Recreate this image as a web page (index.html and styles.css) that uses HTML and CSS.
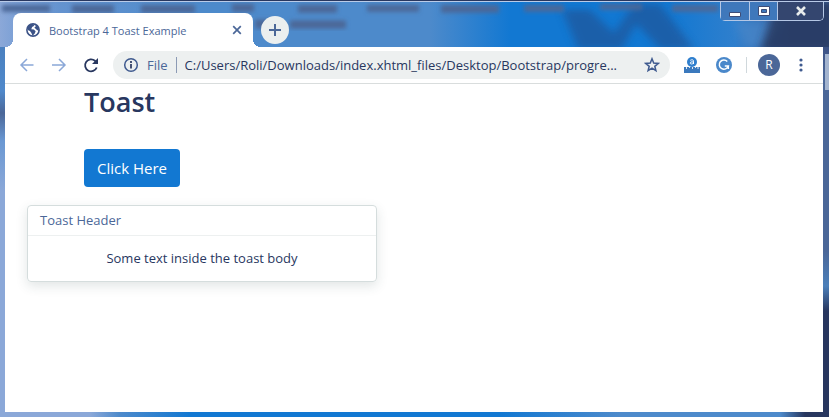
FILE: index.html
```html
<!DOCTYPE html>
<html lang="en">
<head>
<meta charset="utf-8">
<title>Bootstrap 4 Toast Example</title>
<link rel="stylesheet" href="styles.css">
</head>
<body>
<div class="window">
  <header class="titlebar">
    <svg class="wallpaper" viewBox="0 0 829 46" preserveAspectRatio="none" aria-hidden="true">
      <defs>
        <filter id="soft"><feGaussianBlur stdDeviation="2"/></filter>
        <filter id="wide"><feGaussianBlur stdDeviation="4"/></filter>
      </defs>
      <g fill="#24508f" opacity="0.6" filter="url(#wide)">
        <path d="M562 8h28l24 24 20-30h26l34 46h-34l-24-26-14 26h-44z"/>
      </g>
      <path d="M735 20h50l-20 26h-20z" fill="#4d8acb" opacity="0.6" filter="url(#wide)"/>
      <path d="M776 0h60v50h-76z" fill="#28375f" opacity="0.85" filter="url(#wide)"/>
      <g fill="#4b6798" filter="url(#soft)">
        <path d="M2 3h48v7H2zM72 3h42v8H72zM141 3h54v8h-54zM232 2h22v8h-22zM255 18h22v9h-22zM298 3h39v8h-39zM290 19h56v8h-56zM367 3h52v7h-52zM441 3h58v8h-58zM524 3h40v7h-40zM600 2h42v6h-42zM672 3h46v7h-46z"/>
      </g>
    </svg>
    <div class="tab">
      <svg viewBox="0 0 16 16" width="14" height="14" aria-hidden="true"><circle cx="8" cy="8" r="7" fill="#fff" stroke="#3c5387" stroke-width="1.8"/><path d="M1.500 5 4 2l4-1 1.500 2L7 4.500 6 7l3 .5 2 2-1 2.500-2.500 2.500L6 11 4.500 9 2 8zM11 2l3 3 1 4-2.500-1L11 6.500l-1.500-1L11 4z" fill="#3c5387"/></svg>
      <span class="tab-title">Bootstrap 4 Toast Example</span>
      <button class="plain" aria-label="Close tab"><svg viewBox="0 0 10 10" width="10" height="10"><path d="M1.200 1.200l7.600 7.600M8.800 1.200L1.200 8.800" stroke="#4b6798" stroke-width="1.700"/></svg></button>
    </div>
    <button class="new-tab" aria-label="New tab"><svg viewBox="0 0 14 14" width="14" height="14"><path d="M7 1v12M1 7h12" stroke="#4b6798" stroke-width="2"/></svg></button>
    <div class="window-buttons">
      <button aria-label="Minimize"><svg viewBox="0 0 14 12" width="14" height="12"><path d="M1.500 7.500h11v4h-11z" fill="#fff" stroke="#3d4d78"/></svg></button>
      <button aria-label="Maximize"><svg viewBox="0 0 14 12" width="14" height="12"><path d="M1.500 1.500h11v9h-11zM4.500 4.500h5v3h-5z" fill="#fff" fill-rule="evenodd" stroke="#3d4d78"/></svg></button>
      <button class="close" aria-label="Close"><svg viewBox="0 0 12 12" width="12" height="12"><path d="M2 2l8 8M10 2l-8 8" stroke="#e8ecec" stroke-width="2.600"/></svg></button>
    </div>
  </header>
  <nav class="toolbar">
    <button class="plain" aria-label="Back"><svg viewBox="0 0 16 16" width="16" height="16" fill="none" stroke="#8ba8d8" stroke-width="1.500"><path d="M14.500 8h-12M8 2L2 8l6 6"/></svg></button>
    <button class="plain" aria-label="Forward"><svg viewBox="0 0 16 16" width="16" height="16" fill="none" stroke="#8ba8d8" stroke-width="1.500"><path d="M1 8h12M8 2l6 6-6 6"/></svg></button>
    <button class="plain" aria-label="Reload"><svg viewBox="0 0 16 16" width="16" height="16"><path d="M13.700 10.500A6 6 0 1 1 12 3.800l1.500 1.500" fill="none" stroke="#28375f" stroke-width="1.800"/><path d="M15 1v6H9z" fill="#28375f"/></svg></button>
    <div class="omnibox">
      <svg viewBox="0 0 16 16" width="16" height="16" aria-hidden="true"><circle cx="8" cy="8" r="6.300" fill="none" stroke="#3f5a8f" stroke-width="1.500"/><path d="M8 7v4.500M8 4v2" stroke="#28375f" stroke-width="1.700"/></svg>
      <span class="scheme">File</span>
      <input class="url" aria-label="Address" value="C:/Users/Roli/Downloads/index.xhtml_files/Desktop/Bootstrap/progre...">
      <button class="plain" aria-label="Bookmark"><svg viewBox="0 0 16 16" width="16" height="16"><path d="M8 1.800l1.700 4.300 4.600.3-3.500 2.900 1.100 4.400L8 11.200l-3.900 2.500 1.100-4.400-3.500-2.900 4.600-.3z" fill="none" stroke="#3f5a8f" stroke-width="1.500"/></svg></button>
    </div>
    <div class="extensions">
      <button class="plain" aria-label="Ruler extension"><svg viewBox="0 0 16 16" width="16" height="16"><circle cx="8" cy="5" r="5" fill="#2f7fce"/><path d="M0 10h16v6H0z" fill="#3b79bd"/><path d="M6.300 3.300c2-1 3.200-.5 3.200 1V7M9.500 5c-2-.3-3.300 0-3.300 1.100s2 1.300 3.300 0" fill="none" stroke="#fff"/><path d="M2.500 10v2M5.500 10v1M8.500 10v2M11.500 10v1M14 10v2" stroke="#dce8f2"/></svg></button>
      <button class="plain" aria-label="Grammar extension"><svg viewBox="0 0 16 16" width="16" height="16"><circle cx="8" cy="8" r="8" fill="#4a88ca"/><path d="M11.300 4.500A4.600 4.600 0 1 0 12.300 9H8.800M12.300 8.500v3.500" fill="none" stroke="#fff" stroke-width="1.500"/></svg></button>
    </div>
    <button class="avatar" aria-label="Profile">R</button>
    <button class="plain" aria-label="Menu"><svg viewBox="0 0 4 14" width="4" height="14" fill="#3f5a8f"><circle cx="2" cy="2" r="1.600"/><circle cx="2" cy="7" r="1.600"/><circle cx="2" cy="12" r="1.600"/></svg></button>
  </nav>
  <main class="page">
    <div class="container">
      <h1>Toast</h1>
      <button class="btn">Click Here</button>
    </div>
    <section class="toast" role="status">
      <div class="toast-header">Toast Header</div>
      <div class="toast-body">Some text inside the toast body</div>
    </section>
  </main>
</div>
</body>
</html>
```
FILE: styles.css
```css
* { box-sizing: border-box; }

body {
  margin: 0;
  font-family: "Open Sans", "Noto Sans", sans-serif;
  color: #28375f;
}

button {
  font: inherit;
  border: 0;
  padding: 0;
}

svg { display: block; }

.plain { background: none; flex: none; }

/* Glass window frame over the desktop wallpaper */
.window {
  min-height: 100vh;
  padding: 0 6px 5px 5px;
  display: flex;
  flex-direction: column;
  border-top: 1px solid #28375f;
  background:
    linear-gradient(#a3b4cf, #a3b4cf) 100% 53px / 4px 36px no-repeat,
    linear-gradient(#3c5285 46px, #4b6798 75px, #4b6798 250px, #4c80ba 285px, #28375f 310px) 100% 0 / 6px 100% no-repeat,
    linear-gradient(#4a80bf 46px, #5089cb 90px, #4b6798 112px, #6a98d3 140px, #8ba8d8 190px) 0 0 / 5px 100% no-repeat,
    linear-gradient(90deg, #8ba8d8 90px, #4d8acb 120px, #1278d2 190px, #1278d2 500px, #4d8acb 620px, #4d8acb 780px, #28375f 805px) 0 100% / 100% 5px no-repeat,
    #1278d2;
}

.titlebar {
  position: relative;
  height: 46px;
  flex: none;
  display: flex;
  align-items: flex-end;
  margin: 0 -6px 0 -5px;
  padding-left: 13px;
  border-top: 1px solid #b9cbe8;
  background: linear-gradient(90deg, #8ba8d8 0, #7da1d6 14px, #6493cf 60px, #4d8acb 200px, #4d8acb 430px, #1278d2 510px, #1278d2 670px, #2f7fcd 735px, #3e609a 790px);
}

.wallpaper {
  position: absolute;
  inset: 0;
  width: 100%;
  height: 100%;
}

.tab,
.new-tab,
.window-buttons { position: relative; }

.tab {
  width: 240px;
  height: 34px;
  display: flex;
  align-items: center;
  gap: 9px;
  padding: 0 11px 0 13px;
  background: #fff;
  border-radius: 8px 8px 0 0;
}

/* Outward curves at the foot of the tab */
.tab::before,
.tab::after {
  content: "";
  position: absolute;
  bottom: 0;
  width: 8px;
  height: 8px;
}

.tab::before {
  right: 100%;
  background: radial-gradient(circle at 0 0, transparent 8px, #fff 8px);
}

.tab::after {
  left: 100%;
  background: radial-gradient(circle at 100% 0, transparent 8px, #fff 8px);
}

.tab-title {
  flex: 1;
  font-size: 11px;
  color: #4b6798;
  white-space: nowrap;
}

.new-tab {
  width: 28px;
  height: 28px;
  margin: 0 0 3px 8px;
  display: grid;
  place-items: center;
  border-radius: 50%;
  background: #ebefef;
}

.window-buttons {
  align-self: flex-start;
  display: flex;
  height: 19px;
  margin: 0 5px 0 auto;
  border: 1px solid #b4c7e5;
  border-top: 0;
  border-radius: 0 0 5px 5px;
}

.window-buttons button {
  width: 28px;
  display: grid;
  place-items: center;
  background: #3f78bb;
}

.window-buttons button + button { border-left: 1px solid #b4c7e5; }
.window-buttons .close { width: 46px; background: #34466f; border-radius: 0 0 4px 0; }

.toolbar {
  height: 37px;
  flex: none;
  display: flex;
  align-items: center;
  gap: 16px;
  padding: 0 20px 0 14px;
  background: #fff;
  border-bottom: 1px solid #d9dddd;
}

.omnibox {
  flex: 1;
  min-width: 0;
  height: 28px;
  margin-left: -2px;
  padding: 0 10px;
  display: flex;
  align-items: center;
  gap: 8px;
  font-size: 13px;
  border-radius: 14px;
  background: #edf0f0;
}

.scheme {
  padding-right: 8px;
  line-height: 16px;
  color: #4b6798;
  border-right: 1px solid #8c9bb5;
}

.url {
  flex: 1;
  min-width: 0;
  padding: 0;
  border: 0;
  background: none;
  font: inherit;
  color: #28375f;
}

.extensions {
  display: flex;
  gap: 16px;
  margin-left: -2px;
  padding-right: 14px;
  border-right: 1px solid #d0d8dc;
}

.avatar {
  width: 22px;
  height: 22px;
  margin: 0 3px 0 -5px;
  border-radius: 50%;
  background: #4b6798;
  color: #fff;
  font-size: 12px;
  line-height: 22px;
}

.page {
  flex: 1;
  background: #fff;
  padding-bottom: 16px;
}

.container { padding: 0 79px; }

h1 {
  margin: 0 0 29px;
  font-size: 27px;
  font-weight: 600;
  line-height: 36px;
}

.btn {
  height: 38px;
  padding: 0 13px;
  font-size: 15px;
  color: #fff;
  background: #1278d2;
  border-radius: 4px;
}

.toast {
  max-width: 350px;
  margin: 18px 22px 0;
  border: 1px solid #d5dddd;
  border-radius: 4px;
  box-shadow: 0 4px 12px rgba(40, 70, 70, 0.14);
}

.toast-header {
  padding: 4px 12px;
  font-size: 13px;
  line-height: 21px;
  color: #4b6798;
  border-bottom: 1px solid #edf0f0;
}

.toast-body {
  padding: 12px;
  font-size: 13px;
  line-height: 21px;
  text-align: center;
}
```
